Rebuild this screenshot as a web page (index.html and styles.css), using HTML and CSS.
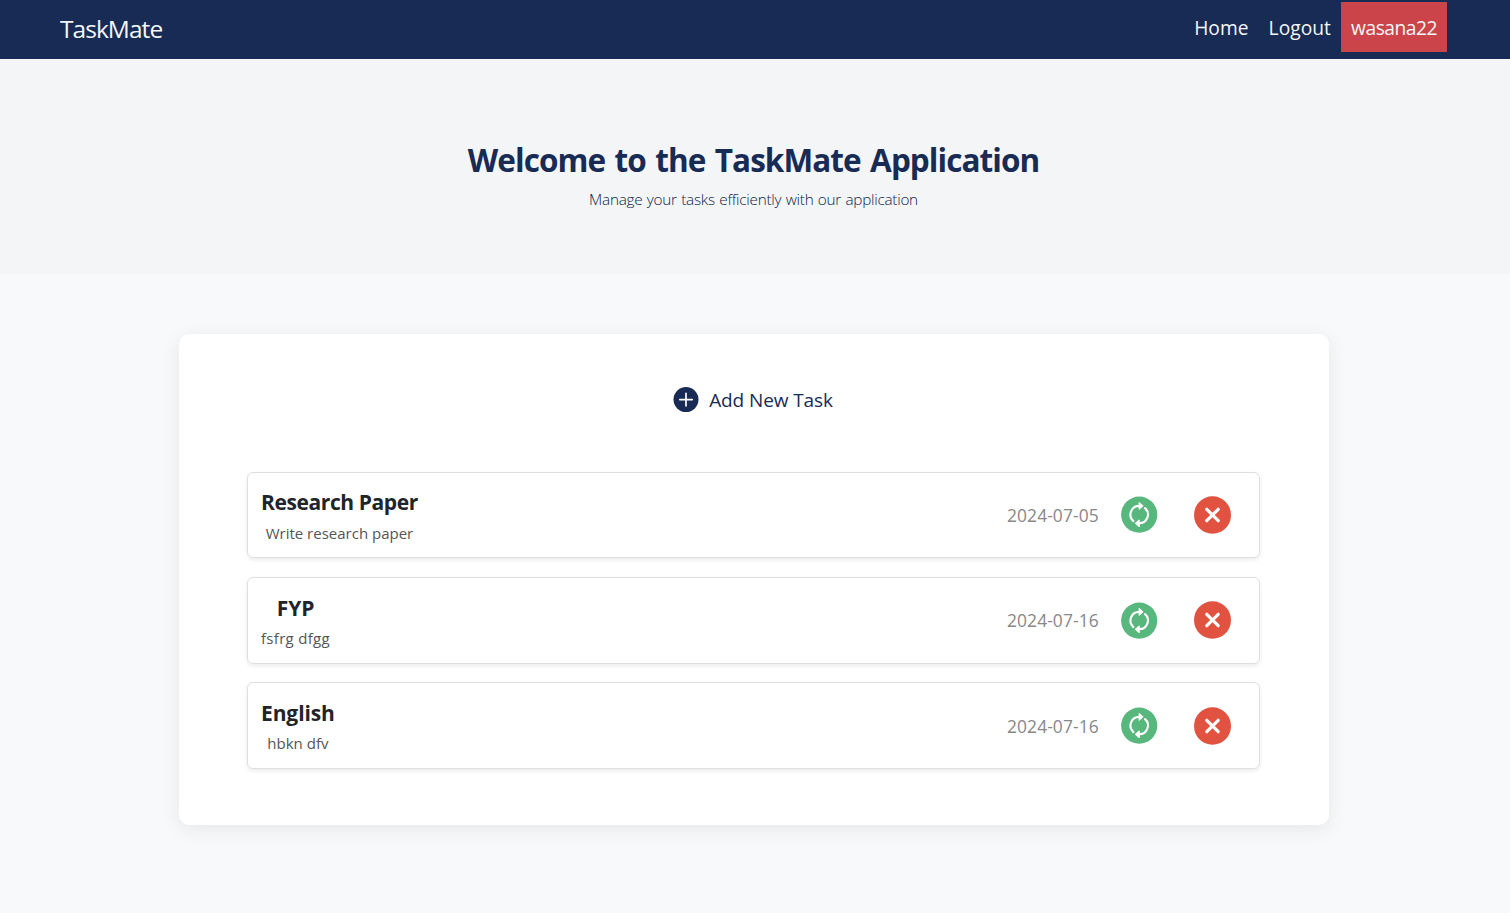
FILE: index.html
```html
<!DOCTYPE html>
<html lang="en">
<head>
<meta charset="utf-8">
<title>TaskMate</title>
<link rel="stylesheet" href="styles.css">
</head>
<body>
<svg class="sprite" aria-hidden="true">
  <symbol id="update" viewBox="0 0 37 37">
    <circle cx="18.2" cy="18.6" r="18.1" fill="#58b77d"/>
    <g fill="none" stroke="#fff" stroke-width="2.1" stroke-linecap="round">
      <path d="M12.4 25.1A8.7 8.7 0 0 1 18.2 9.9"/>
      <path d="M24 12.1A8.7 8.7 0 0 1 18.2 27.3"/>
    </g>
    <path fill="#fff" stroke="#fff" stroke-width="1.2" stroke-linejoin="round" d="M18.2 6.7L21.8 9.9 18.2 13.1ZM18.2 24.1L18.2 30.5 14.6 27.3Z"/>
  </symbol>
  <symbol id="remove" viewBox="0 0 37 38">
    <ellipse cx="18.5" cy="19" rx="18.5" ry="18.8" fill="#e15241"/>
    <path d="M12.8 13.3L24.2 24.7M24.2 13.3L12.8 24.7" stroke="#fff" stroke-width="3.2" stroke-linecap="round"/>
  </symbol>
</svg>
<header class="navbar">
  <a class="brand">TaskMate</a>
  <nav class="nav">
    <a class="nav-link">Home</a>
    <a class="nav-link">Logout</a>
    <a class="nav-link user">wasana22</a>
  </nav>
</header>
<section class="hero">
  <h1 class="hero-title">Welcome to the TaskMate Application</h1>
  <p class="hero-text">Manage your tasks efficiently with our application</p>
</section>
<main class="panel">
  <a class="add">
    <svg class="add-icon" viewBox="0 0 26 26"><circle cx="13" cy="12.6" r="12.5" fill="#182b54"/><path d="M13 6.4V18.8M6.8 12.6H19.2" stroke="#fff" stroke-width="1.7" stroke-linecap="round"/></svg>
    <span class="add-label">Add New Task</span>
  </a>
  <ul class="tasks">
    <li class="task">
      <div class="info"><h2 class="name">Research Paper</h2><p class="desc">Write research paper</p></div>
      <div class="actions"><span class="date">2024-07-05</span><svg class="update"><use href="#update"/></svg><svg class="remove"><use href="#remove"/></svg></div>
    </li>
    <li class="task">
      <div class="info"><h2 class="name short">FYP</h2><p class="desc loose">fsfrg dfgg</p></div>
      <div class="actions"><span class="date">2024-07-16</span><svg class="update"><use href="#update"/></svg><svg class="remove"><use href="#remove"/></svg></div>
    </li>
    <li class="task">
      <div class="info"><h2 class="name short">English</h2><p class="desc">hbkn dfv</p></div>
      <div class="actions"><span class="date">2024-07-16</span><svg class="update"><use href="#update"/></svg><svg class="remove"><use href="#remove"/></svg></div>
    </li>
  </ul>
</main>
</body>
</html>
```
FILE: styles.css
```css
* { box-sizing: border-box; margin: 0; padding: 0; }
body { min-height: 100vh; background: #f8f9fb; font-family: "Segoe UI", "Open Sans", "Noto Sans", sans-serif; color: #212529; }
.sprite { display: none; }
.navbar { display: flex; justify-content: space-between; align-items: flex-start; height: 59px; padding: 2px 63px 0 60px; background: #182b54; color: #f4f6f8; }
.brand { font-size: 24.5px; line-height: 54px; letter-spacing: -.95px; }
.nav { display: flex; }
.nav-link { padding: 0 10px; font-size: 19.2px; line-height: 52px; height: 50px; letter-spacing: .05px; white-space: nowrap; }
.user { width: 106px; background: #cb444a; letter-spacing: -.45px; }
.hero { height: 215px; padding: 79px 3px 0 0; background: #f4f5f7; text-align: center; color: #182b54; }
.hero-title { font-size: 31.5px; line-height: 44px; letter-spacing: -.95px; word-spacing: 2.2px; font-weight: 700; }
.hero-text { margin-top: 6px; font-size: 15.3px; line-height: 22px; font-weight: 300; letter-spacing: -.25px; word-spacing: .7px; color: #0c1c44; }
.panel { width: 1150px; height: 491px; margin: 60px 0 0 179px; padding: 52px 69px 0 68px; background: #fff; border-radius: 10px; box-shadow: 0 4px 20px rgba(0,0,0,.08); }
.add { display: flex; justify-content: center; align-items: center; gap: 10px; height: 27px; padding-right: 1px; color: #182b54; }
.add-icon { width: 26px; height: 26px; }
.add-label { padding-top: 1px; font-size: 19px; line-height: 27px; letter-spacing: -.1px; }
.tasks { list-style: none; margin-top: 58.7px; display: flex; flex-direction: column; gap: 18.7px; }
.task { display: flex; justify-content: space-between; height: 86.6px; padding: 0 28px 0 13px; border: 1px solid #dedfe1; border-radius: 6px; box-shadow: 0 2px 4px rgba(0,0,0,.08); }
.info { padding-top: 14.6px; text-align: center; }
.name { font-size: 21px; line-height: 30px; font-weight: 700; letter-spacing: -.4px; }
.name.short { letter-spacing: -.1px; }
.desc { margin-top: 4.3px; font-size: 15px; line-height: 22px; letter-spacing: 0; color: #555; }
.desc.loose { letter-spacing: .3px; }
.actions { display: flex; align-items: center; }
.date { width: 92px; font-size: 17.4px; letter-spacing: .1px; color: #888; white-space: nowrap; margin-right: 22px; }
.update { width: 37px; height: 37px; margin-right: 36px; }
.remove { width: 37px; height: 38px; }
```
